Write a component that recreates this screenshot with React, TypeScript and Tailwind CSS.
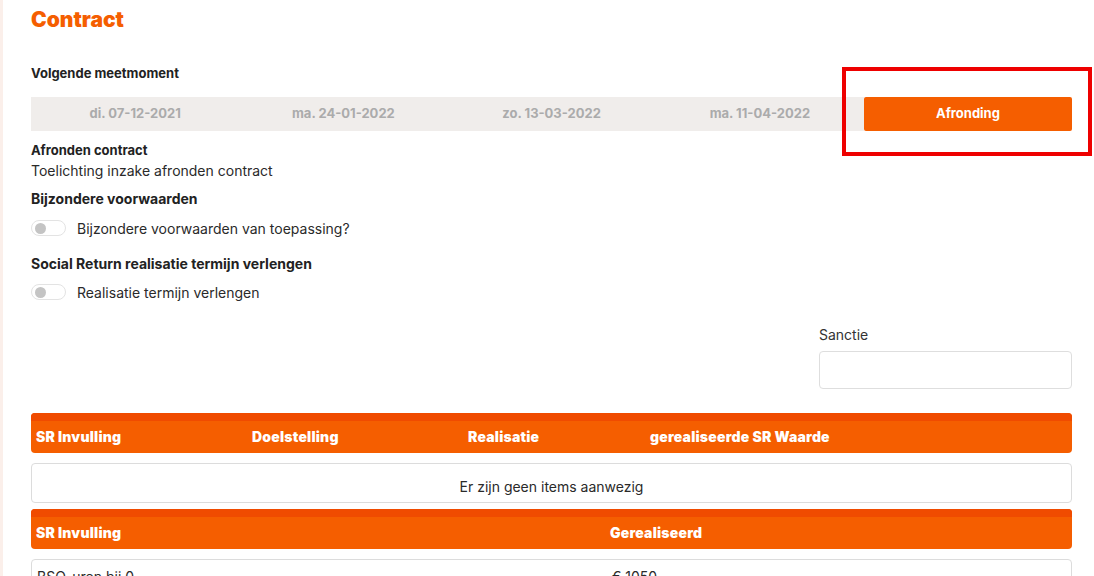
import React from "react";

const DATES = ["di. 07-12-2021", "ma. 24-01-2022", "zo. 13-03-2022", "ma. 11-04-2022"];

function Toggle({ label }: { label: string }) {
  return (
    <label className="flex items-center gap-[11px]">
      <span className="flex h-[16px] w-[35px] items-center rounded-full border border-[#e3e3e3] bg-white pl-[3px]">
        <span className="h-[11px] w-[11px] rounded-full bg-[#c4c4c4]" />
      </span>
      <span className="text-[14px] text-[#2a2a2a]">{label}</span>
    </label>
  );
}

function TableHead({ cols }: { cols: { label: string; w?: string }[] }) {
  return (
    <div className="overflow-hidden rounded-[4px] bg-[#f55e00]">
      <div className="h-[8px] bg-[#f04b00]" />
      <div className="flex h-[32px] items-center px-[5px] text-[14px] font-black tracking-[0.2px] text-white">
        {cols.map((c) => (
          <div key={c.label} className={c.w ?? "flex-1"}>
            {c.label}
          </div>
        ))}
      </div>
    </div>
  );
}

export default function App() {
  return (
    <div
      className="flex h-[576px] overflow-hidden bg-white text-[#222]"
      style={{ fontFamily: "Inter, 'Noto Sans', sans-serif" }}
    >
      <div className="w-[3px] shrink-0 bg-[#fbefea]" />
      <main className="flex-1 pl-[28px] pr-[22px] pt-[4px]">
        <h1 className="text-[21px] font-black text-[#f55e00]">Contract</h1>

        <div className="mt-[28px] text-[13px] font-bold">Volgende meetmoment</div>

        <div className="relative mt-[14px] flex h-[34px]">
          <div className="flex flex-1 items-center bg-[#f0edeb] text-[13px] font-bold text-[#ababab]">
            {DATES.map((d) => (
              <div key={d} className="flex-1 text-center">
                {d}
              </div>
            ))}
          </div>
          <button className="w-[208px] rounded-[2px] bg-[#f55e00] text-[13px] font-bold text-white">
            Afronding
          </button>
          <div className="pointer-events-none absolute right-[-20px] top-[-30px] h-[89px] w-[250px] border-[4px] border-[#ee0000]" />
        </div>

        <div className="mt-[10px] text-[13px] font-bold">Afronden contract</div>
        <div className="-mt-[1px] text-[14px] text-[#2a2a2a]">Toelichting inzake afronden contract</div>

        <div className="mt-[7px] text-[14px] font-bold">Bijzondere voorwaarden</div>
        <div className="mt-[9px]">
          <Toggle label="Bijzondere voorwaarden van toepassing?" />
        </div>

        <div className="mt-[14px] text-[14px] font-bold">Social Return realisatie termijn verlengen</div>
        <div className="mt-[8px]">
          <Toggle label="Realisatie termijn verlengen" />
        </div>

        <div className="mt-[21px] flex justify-end">
          <div className="w-[253px]">
            <div className="text-[14px] text-[#333]">Sanctie</div>
            <input className="mt-[6px] h-[38px] w-full rounded-[4px] border border-[#dedede] bg-white" />
          </div>
        </div>

        <div className="mt-[24px]">
          <TableHead
            cols={[
              { label: "SR Invulling", w: "w-[216px]" },
              { label: "Doelstelling", w: "w-[216px]" },
              { label: "Realisatie", w: "w-[182px]" },
              { label: "gerealiseerde SR Waarde" },
            ]}
          />
          <div className="mt-[10px] flex h-[40px] items-center justify-center rounded-[4px] border border-[#dcdcdc] pt-[8px] text-[14px] text-[#2a2a2a]">
            Er zijn geen items aanwezig
          </div>
          <div className="mt-[6px]">
            <TableHead cols={[{ label: "SR Invulling", w: "w-[574px]" }, { label: "Gerealiseerd" }]} />
          </div>
          <div className="mt-[10px] flex h-[40px] rounded-[4px] border border-[#dcdcdc] px-[5px] pt-[6px] text-[14px] text-[#2a2a2a]">
            <div className="w-[575px]">BSO-uren bij 0</div>
            <div>€ 1050</div>
          </div>
        </div>
      </main>
    </div>
  );
}
